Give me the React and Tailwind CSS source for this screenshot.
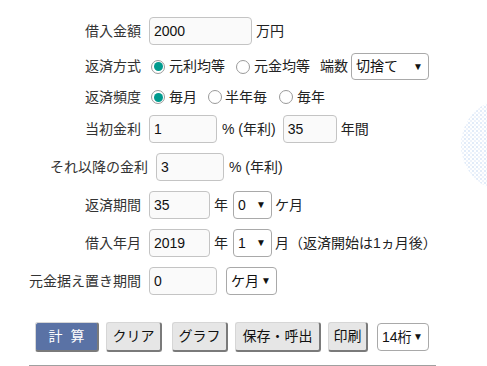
import React from "react";

const F = { fontFamily: '"Liberation Sans", "Noto Sans CJK JP", sans-serif' };

function Input({ w, value }) {
  return (
    <div
      className={`${w} h-[28px] border border-[#c4c4c4] rounded-[4px] bg-[#fafafa] flex items-center pl-[4px] text-[14px] text-[#111] shrink-0`}
    >
      {value}
    </div>
  );
}

function Select({ w, value, h = "h-[28px]" }) {
  return (
    <div
      className={`${w} ${h} border border-[#a9a9a9] rounded-[4px] bg-white flex items-center justify-between pl-[4px] pr-[5px] text-[14px] text-[#111] shrink-0`}
    >
      <span>{value}</span>
      <span className="text-[10px] leading-none">▼</span>
    </div>
  );
}

function Radio({ checked }) {
  return (
    <span className="w-[14px] h-[14px] rounded-full border border-[#9a9a9a] bg-white flex items-center justify-center shrink-0">
      {checked && <span className="w-[9px] h-[9px] rounded-full bg-[#009a8e]" />}
    </span>
  );
}

function Label({ children, w = "w-[141px]" }) {
  return <div className={`${w} text-right shrink-0 text-[#333]`}>{children}</div>;
}

function Btn({ children, w, primary }) {
  return (
    <div
      className={`${w} h-[30px] flex items-center justify-center text-[14px] shrink-0 border-t border-l border-[#d6d6d6] border-r-[2px] border-b-[2px] border-r-[#7a7a7a] border-b-[#7a7a7a] rounded-[3px] ${
        primary ? "bg-[#5a72a5] text-white" : "bg-[#e6e6e6] text-[#111]"
      }`}
    >
      {children}
    </div>
  );
}

export default function App() {
  return (
    <div className="relative w-[487px] h-[366px] bg-white overflow-hidden text-[14px] text-[#222]" style={F}>
      <svg className="absolute left-[460px] top-[98px]" width="100" height="96">
        <defs>
          <pattern id="dots" width="4" height="4" patternUnits="userSpaceOnUse">
            <rect x="0" y="0" width="2" height="2" fill="#e2ecf9" />
            <rect x="2" y="2" width="2" height="2" fill="#eef3fb" />
          </pattern>
        </defs>
        <circle cx="48" cy="47" r="47" fill="url(#dots)" />
      </svg>

      <div className="relative flex flex-col pt-[17px]">
        <div className="flex items-center h-[28px]">
          <Label>借入金額</Label>
          <div className="ml-[8px]"><Input w="w-[103px]" value="2000" /></div>
          <span className="ml-[4px]">万円</span>
        </div>

        <div className="flex items-center h-[27px] mt-[8px]">
          <Label>返済方式</Label>
          <span className="ml-[10px]"><Radio checked /></span>
          <span className="ml-[4px]">元利均等</span>
          <span className="ml-[11px]"><Radio /></span>
          <span className="ml-[4px]">元金均等</span>
          <span className="ml-[10px]">端数</span>
          <div className="ml-[3px]"><Select w="w-[78px]" h="h-[27px]" value="切捨て" /></div>
        </div>

        <div className="flex items-center h-[20px] mt-[7px]">
          <Label>返済頻度</Label>
          <span className="ml-[10px]"><Radio checked /></span>
          <span className="ml-[4px]">毎月</span>
          <span className="ml-[11px]"><Radio /></span>
          <span className="ml-[3px]">半年毎</span>
          <span className="ml-[12px]"><Radio /></span>
          <span className="ml-[4px]">毎年</span>
        </div>

        <div className="flex items-center h-[28px] mt-[8px]">
          <Label>当初金利</Label>
          <div className="ml-[8px]"><Input w="w-[68px]" value="1" /></div>
          <span className="ml-[5px]">% (年利)</span>
          <div className="ml-[7px]"><Input w="w-[54px]" value="35" /></div>
          <span className="ml-[4px]">年間</span>
        </div>

        <div className="flex items-center h-[28px] mt-[10px]">
          <Label w="w-[148px]">それ以降の金利</Label>
          <div className="ml-[8px]"><Input w="w-[68px]" value="3" /></div>
          <span className="ml-[5px]">% (年利)</span>
        </div>

        <div className="flex items-center h-[28px] mt-[10px]">
          <Label>返済期間</Label>
          <div className="ml-[8px]"><Input w="w-[61px]" value="35" /></div>
          <span className="ml-[4px]">年</span>
          <div className="ml-[5px]"><Select w="w-[39px]" value="0" /></div>
          <span className="ml-[3px]">ケ月</span>
        </div>

        <div className="flex items-center h-[28px] mt-[10px]">
          <Label>借入年月</Label>
          <div className="ml-[8px]"><Input w="w-[61px]" value="2019" /></div>
          <span className="ml-[4px]">年</span>
          <div className="ml-[5px]"><Select w="w-[39px]" value="1" /></div>
          <span className="ml-[3px]">月（返済開始は1ヵ月後）</span>
        </div>

        <div className="flex items-center h-[28px] mt-[10px]">
          <Label>元金据え置き期間</Label>
          <div className="ml-[8px]"><Input w="w-[68px]" value="0" /></div>
          <div className="ml-[9px]"><Select w="w-[51px]" value="ケ月" /></div>
        </div>

        <div className="flex items-center mt-[27px] pl-[35px]">
          <Btn w="w-[64px]" primary>計&nbsp;&nbsp;算</Btn>
          <div className="ml-[7px]"><Btn w="w-[56px]">クリア</Btn></div>
          <div className="ml-[10px]"><Btn w="w-[56px]">グラフ</Btn></div>
          <div className="ml-[7px]"><Btn w="w-[86px]">保存・呼出</Btn></div>
          <div className="ml-[7px]"><Btn w="w-[40px]">印刷</Btn></div>
          <div className="ml-[9px]"><Select w="w-[52px]" value="14桁" /></div>
        </div>

        <div className="ml-[29px] mt-[13px] w-[407px] h-px bg-[#a0a0a0]" />
      </div>
    </div>
  );
}
